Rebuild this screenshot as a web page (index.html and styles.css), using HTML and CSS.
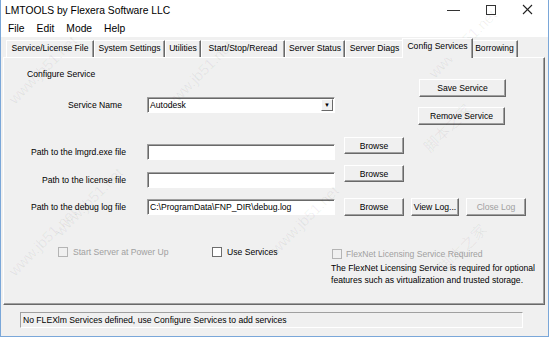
FILE: index.html
```html
<!DOCTYPE html>
<html lang="en">
<head>
  <meta charset="UTF-8" />
  <title>LMTOOLS by Flexera Software LLC</title>
  <link rel="stylesheet" href="styles.css">
</head>
<body>
  <div class="window">
    <div class="titlebar">
      <span class="title">LMTOOLS by Flexera Software LLC</span>
      <svg class="controls" width="108" height="20" viewBox="0 0 108 20">
        <line x1="7" y1="10.5" x2="20" y2="10.5" stroke="#333" stroke-width="1"/>
        <rect x="46.5" y="5.5" width="9" height="9" fill="none" stroke="#333" stroke-width="1"/>
        <line x1="83" y1="5" x2="92" y2="14" stroke="#222" stroke-width="1.1"/>
        <line x1="92" y1="5" x2="83" y2="14" stroke="#222" stroke-width="1.1"/>
      </svg>
    </div>
    <div class="menubar">
      <span>File</span>
      <span>Edit</span>
      <span>Mode</span>
      <span>Help</span>
    </div>

    <div class="tabs">
      <div class="tab" style="width:88px">Service/License File</div>
      <div class="tab" style="width:71px">System Settings</div>
      <div class="tab" style="width:36px">Utilities</div>
      <div class="tab" style="width:84px">Start/Stop/Reread</div>
      <div class="tab" style="width:60px">Server Status</div>
      <div class="tab" style="width:59px">Server Diags</div>
      <div class="tab active" style="width:71px">Config Services</div>
      <div class="tab" style="width:47px">Borrowing</div>
    </div>

    <div class="panel">
      <div class="top">
        <div class="cfg">
          <div class="cfg-title">Configure Service</div>
          <div class="svc-row">
            <label class="lbl svc-lbl">Service Name</label>
            <div class="combo">
              <span>Autodesk</span>
              <span class="drop">&#9660;</span>
            </div>
          </div>
        </div>
        <div class="side">
          <button class="btn save-btn">Save Service</button>
          <button class="btn remove-btn">Remove Service</button>
        </div>
      </div>

      <div class="row row-lmgrd">
        <div class="field-group">
          <label class="lbl">Path to the lmgrd.exe file</label>
          <input class="text" type="text" value="">
        </div>
        <button class="btn browse-btn">Browse</button>
      </div>

      <div class="row row-license">
        <div class="field-group">
          <label class="lbl">Path to the license file</label>
          <input class="text" type="text" value="">
        </div>
        <button class="btn browse-btn">Browse</button>
      </div>

      <div class="row row-debug">
        <div class="field-group">
          <label class="lbl">Path to the debug log file</label>
          <input class="text" type="text" value="C:\ProgramData\FNP_DIR\debug.log">
        </div>
        <button class="btn browse-btn">Browse</button>
        <button class="btn view-btn">View Log...</button>
        <button class="btn close-btn" disabled>Close Log</button>
      </div>

      <div class="bottom">
        <div class="opts">
          <div class="chk chk-power disabled"><span class="box"></span>Start Server at Power Up</div>
          <div class="chk chk-use"><span class="box"></span>Use Services</div>
        </div>
        <div class="flexnet">
          <div class="chk disabled"><span class="box"></span>FlexNet Licensing Service Required</div>
          <p class="note">The FlexNet Licensing Service is required for optional<br>features such as virtualization and trusted storage.</p>
        </div>
      </div>
    </div>

    <div class="status">No FLEXlm Services defined, use Configure Services to add services</div>

    <span class="wm" style="left:436px;top:64px">www.jb51.net</span>
    <span class="wm" style="left:16px;top:90px">www.jb51.net</span>
    <span class="wm" style="left:172px;top:95px">www.jb51.net</span>
    <span class="wm" style="left:432px;top:135px">脚本之家</span>
    <span class="wm" style="left:62px;top:222px">www.jb51.net</span>
    <span class="wm" style="left:16px;top:262px">www.jb51.net</span>
    <span class="wm" style="left:278px;top:240px">www.jb51.net</span>
    <span class="wm" style="left:447px;top:255px">脚本之家</span>
  </div>
</body>
</html>
```

FILE: styles.css
```css
* {
  box-sizing: border-box;
}
body {
  margin: 0;
  font-family: "Liberation Sans", Arial, sans-serif;
  color: #000;
}
.window {
  position: relative;
  width: 549px;
  height: 337px;
  background: #f0f0f0;
  border: 1px solid #7aa7d9;
  border-top: none;
  overflow: hidden;
}
.titlebar {
  height: 20px;
  background: #fff;
  display: flex;
  align-items: center;
  padding-left: 4px;
  font-size: 10.3px;
}
.title {
  flex: 1;
}
.controls {
  display: block;
}
.menubar {
  height: 17px;
  background: #fff;
  display: flex;
  align-items: center;
  gap: 12px;
  padding-left: 7px;
  font-size: 10.3px;
}

/* tabs */
.tabs {
  height: 20px;
  display: flex;
  align-items: flex-end;
  padding-left: 5px;
  font-size: 8.6px;
}
.tab {
  height: 17px;
  line-height: 15px;
  text-align: center;
  white-space: nowrap;
  border-top: 1px solid #fff;
  border-left: 1px solid #fff;
  border-right: 1px solid #696969;
  box-shadow: inset -1px 0 #a0a0a0;
  background: #f0f0f0;
}
.tab.active {
  position: relative;
  z-index: 1;
  height: 20px;
  line-height: 15px;
  margin: 0 -2px -1px -2px;
}

/* panel */
.panel {
  margin-left: 2px;
  width: 542px;
  height: 248px;
  border-top: 1px solid #fff;
  border-left: 1px solid #fff;
  border-right: 1px solid #696969;
  border-bottom: 1px solid #696969;
  box-shadow: inset -1px -1px #a0a0a0;
  font-size: 8.6px;
}
.top {
  display: flex;
}
.cfg {
  width: 415px;
}
.cfg-title {
  margin: 11px 0 0 23px;
  line-height: 11px;
}
.svc-row {
  display: flex;
  margin-top: 17px;
}
.lbl {
  display: block;
  width: 122px;
  text-align: right;
  line-height: 16px;
  white-space: nowrap;
}
.svc-lbl {
  width: 118px;
}
.combo {
  margin-left: 25px;
  width: 188px;
  height: 16px;
  background: #fff;
  border: 1px solid;
  border-color: #a0a0a0 #fff #fff #a0a0a0;
  box-shadow: inset 1px 1px #696969;
  display: flex;
  align-items: center;
  justify-content: space-between;
  padding: 0 1px 0 2px;
}
.drop {
  width: 12px;
  height: 12px;
  font-size: 6px;
  line-height: 10px;
  text-align: center;
  background: #f0f0f0;
  border: 1px solid;
  border-color: #fff #696969 #696969 #fff;
}
.side {
  display: flex;
  flex-direction: column;
  padding-top: 21px;
}
.btn {
  font-family: inherit;
  font-size: 8.6px;
  color: #000;
  padding: 0;
  background: #f0f0f0;
  border: 1px solid;
  border-color: #fff #696969 #696969 #fff;
  box-shadow: inset -1px -1px #a0a0a0;
}
.btn:disabled {
  color: #a0a0a0;
}
.save-btn {
  width: 87px;
  height: 18px;
}
.remove-btn {
  width: 87px;
  height: 18px;
  margin: 10px 0 0 -1px;
}

/* path rows */
.row {
  display: flex;
  align-items: flex-start;
}
.field-group {
  display: flex;
  margin-top: 7px;
}
.text {
  margin-left: 21px;
  width: 188px;
  height: 16px;
  padding: 0 2px;
  font-family: inherit;
  font-size: 8.6px;
  background: #fff;
  border: 1px solid;
  border-color: #a0a0a0 #fff #fff #a0a0a0;
  box-shadow: inset 1px 1px #696969;
  outline: none;
}
.browse-btn {
  margin-left: 9px;
  width: 60px;
  height: 17px;
}
.row-lmgrd {
  margin-top: 12px;
}
.row-license {
  margin-top: 5px;
}
.row-debug {
  margin-top: 10px;
}
.row-debug .field-group {
  margin-top: 1px;
}
.row-debug .btn {
  height: 18px;
}
.view-btn {
  margin-left: 7px;
  width: 48px;
}
.close-btn {
  margin-left: 7px;
  width: 60px;
}

/* bottom options */
.bottom {
  display: flex;
  align-items: flex-start;
  margin-top: 30px;
}
.opts {
  display: flex;
  align-items: flex-start;
  width: 327px;
}
.chk {
  display: flex;
  align-items: center;
  line-height: 12px;
  white-space: nowrap;
}
.chk-power {
  margin-left: 54px;
  width: 154px;
}
.box {
  width: 10px;
  height: 10px;
  margin-right: 5px;
  background: #fff;
  border: 1px solid #6d6d6d;
}
.chk.disabled {
  color: #a0a0a0;
}
.chk.disabled .box {
  background: #f0f0f0;
  border-color: #b4b4b4;
}
.flexnet {
  margin-top: 2px;
}
.flexnet .box {
  margin-left: 1px;
  margin-right: 4px;
}
.note {
  margin: 2px 0 0;
  line-height: 12px;
}

/* status bar */
.status {
  margin: 7px 0 0 19px;
  width: 503px;
  height: 16px;
  padding-left: 2px;
  line-height: 14px;
  font-size: 8.6px;
  border: 1px solid;
  border-color: #a0a0a0 #fff #fff #a0a0a0;
}

/* watermark */
.wm {
  position: absolute;
  transform: rotate(-45deg);
  transform-origin: left bottom;
  font-size: 15px;
  color: rgba(0, 0, 0, 0.06);
  font-family: "Liberation Sans", "Noto Sans CJK SC", sans-serif;
  white-space: nowrap;
  pointer-events: none;
}
```
